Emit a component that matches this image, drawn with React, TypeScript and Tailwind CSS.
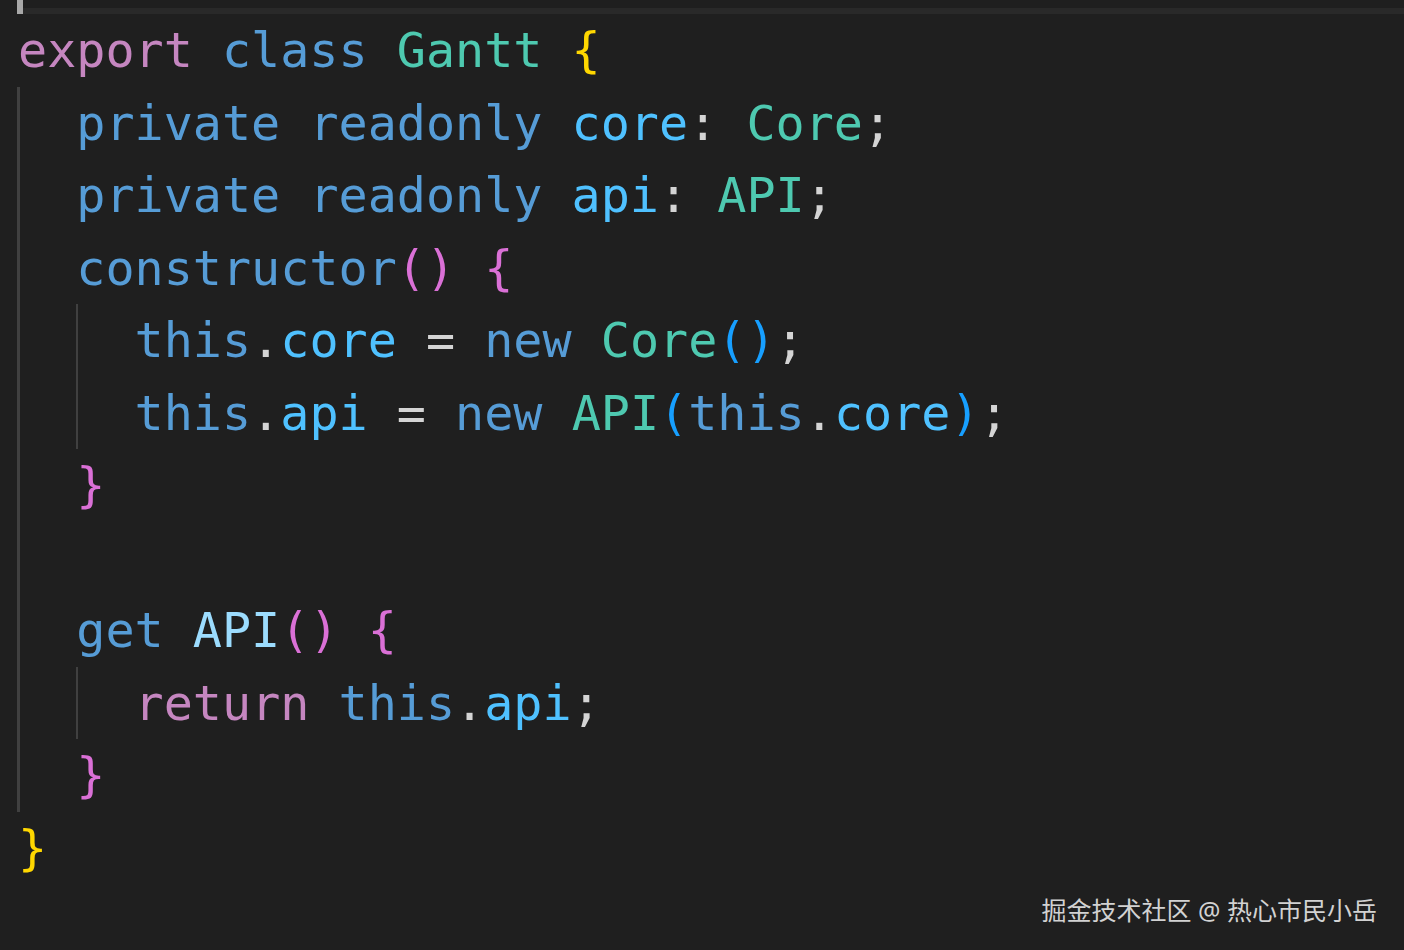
import React from "react";

type Tok = [string, string];

const KW = "text-[#569cd6]";
const CTRL = "text-[#c586c0]";
const TYPE = "text-[#4ec9b0]";
const PROP = "text-[#4fc1ff]";
const FN = "text-[#9cdcfe]";
const PUN = "text-[#d4d4d4]";
const B1 = "text-[#ffd700]";
const B2 = "text-[#da70d6]";
const B3 = "text-[#179fff]";

function Line({ toks, className = "" }: { toks: Tok[]; className?: string }) {
  return (
    <div className={`h-[72.5px] whitespace-pre ${className}`}>
      {toks.map(([t, c], i) => (
        <span key={i} className={c}>
          {t}
        </span>
      ))}
    </div>
  );
}

export default function App() {
  return (
    <div className="w-[1404px] h-[950px] bg-[#1f1f1f] flex flex-col overflow-hidden">
      <div className="flex h-[14px] shrink-0">
        <div className="w-[17px]" />
        <div className="w-[6px] h-[14px] bg-[#a8a8a8]" />
        <div className="flex-1 flex flex-col">
          <div className="h-[8px] bg-[#1f1f1f]" />
          <div className="h-[6px] bg-[#292929]" />
        </div>
      </div>
      <div className="pl-[17px] font-['DejaVu_Sans_Mono','Liberation_Mono',monospace] text-[48.4px] leading-[72.5px]">
        <div className="pl-[1px]">
          <Line
            toks={[
              ["export", CTRL],
              [" ", PUN],
              ["class", KW],
              [" ", PUN],
              ["Gantt", TYPE],
              [" ", PUN],
              ["{", B1],
            ]}
          />
        </div>
        <div className="border-l-[3px] border-[#404040] pl-[56.3px]">
          <Line
            toks={[
              ["private", KW],
              [" ", PUN],
              ["readonly", KW],
              [" ", PUN],
              ["core", PROP],
              [": ", PUN],
              ["Core", TYPE],
              [";", PUN],
            ]}
          />
          <Line
            toks={[
              ["private", KW],
              [" ", PUN],
              ["readonly", KW],
              [" ", PUN],
              ["api", PROP],
              [": ", PUN],
              ["API", TYPE],
              [";", PUN],
            ]}
          />
          <Line
            toks={[
              ["constructor", KW],
              ["()", B2],
              [" ", PUN],
              ["{", B2],
            ]}
          />
          <div className="border-l-2 border-[#404040] pl-[56.3px]">
            <Line
              toks={[
                ["this", KW],
                [".", PUN],
                ["core", PROP],
                [" = ", PUN],
                ["new", KW],
                [" ", PUN],
                ["Core", TYPE],
                ["()", B3],
                [";", PUN],
              ]}
            />
            <Line
              toks={[
                ["this", KW],
                [".", PUN],
                ["api", PROP],
                [" = ", PUN],
                ["new", KW],
                [" ", PUN],
                ["API", TYPE],
                ["(", B3],
                ["this", KW],
                [".", PUN],
                ["core", PROP],
                [")", B3],
                [";", PUN],
              ]}
            />
          </div>
          <Line toks={[["}", B2]]} />
          <Line toks={[[" ", PUN]]} />
          <Line
            toks={[
              ["get", KW],
              [" ", PUN],
              ["API", FN],
              ["()", B2],
              [" ", PUN],
              ["{", B2],
            ]}
          />
          <div className="border-l-2 border-[#404040] pl-[56.3px]">
            <Line
              toks={[
                ["return", CTRL],
                [" ", PUN],
                ["this", KW],
                [".", PUN],
                ["api", PROP],
                [";", PUN],
              ]}
            />
          </div>
          <Line toks={[["}", B2]]} />
        </div>
        <div className="pl-[1px]">
          <Line toks={[["}", B1]]} />
        </div>
      </div>
      <div className="mt-auto flex justify-end pr-[27px] pb-[24px]">
        <span className="text-[25px] leading-[32px] text-[#d2d2d2] font-['Noto_Sans','Noto_Sans_CJK_SC',sans-serif]">
          掘金技术社区 @ 热心市民小岳
        </span>
      </div>
    </div>
  );
}
